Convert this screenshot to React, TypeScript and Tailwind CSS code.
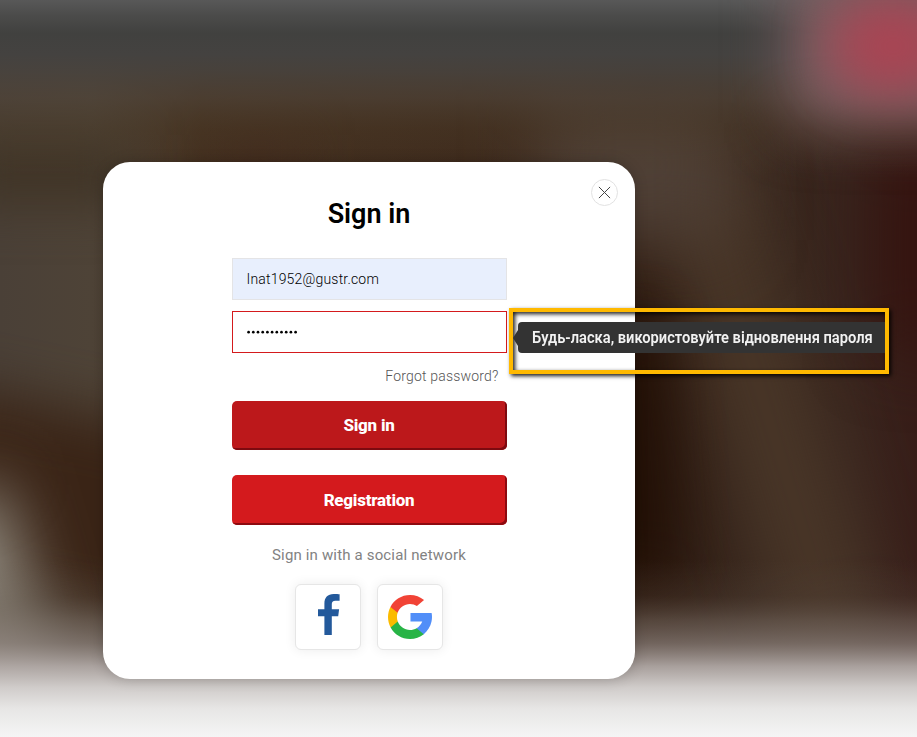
import React from 'react';

function Backdrop() {
  return (
    <svg className="absolute inset-0" width="917" height="737" viewBox="0 0 917 737" aria-hidden="true">
      <defs>
        <linearGradient id="wall">
          <stop offset="0" stopColor="#4a4037" />
          <stop offset="0.1" stopColor="#4e4337" />
          <stop offset="0.22" stopColor="#44301f" />
          <stop offset="0.61" stopColor="#3c281b" />
          <stop offset="0.71" stopColor="#2f1c12" />
          <stop offset="0.83" stopColor="#36251c" />
          <stop offset="0.93" stopColor="#38241d" />
          <stop offset="1" stopColor="#371d18" />
        </linearGradient>
        <linearGradient id="header" x1="0" y1="0" x2="0" y2="1">
          <stop offset="0" stopColor="#585858" />
          <stop offset="0.09" stopColor="#4b4b4a" />
          <stop offset="0.19" stopColor="#41413f" />
          <stop offset="0.31" stopColor="#444240" />
          <stop offset="0.41" stopColor="#48433e" stopOpacity="0.9" />
          <stop offset="0.56" stopColor="#4f4439" stopOpacity="0.67" />
          <stop offset="0.74" stopColor="#4d3e2b" stopOpacity="0.33" />
          <stop offset="1" stopColor="#4d3e2b" stopOpacity="0" />
        </linearGradient>
        <linearGradient id="floor" x1="0" y1="0" x2="0" y2="1">
          <stop offset="0" stopColor="#5e5045" stopOpacity="0" />
          <stop offset="0.2" stopColor="#5e5045" stopOpacity="0.2" />
          <stop offset="0.34" stopColor="#776b62" stopOpacity="0.53" />
          <stop offset="0.47" stopColor="#8a7f79" stopOpacity="0.73" />
          <stop offset="0.6" stopColor="#b0a8a5" stopOpacity="0.94" />
          <stop offset="0.72" stopColor="#d0ccca" />
          <stop offset="0.84" stopColor="#e7e6e5" />
          <stop offset="1" stopColor="#f5f5f5" />
        </linearGradient>
      </defs>
      <rect width="917" height="737" fill="url(#wall)" />
      <rect className="blur-[38px]" x="715" y="130" width="90" height="520" transform="rotate(-17 760 390)" fill="#4b3829" />
      <rect className="blur-[35px]" x="540" y="90" width="190" height="150" fill="#4f4036" />
      <rect className="blur-[30px]" x="560" y="320" width="105" height="260" transform="rotate(-4 612 450)" fill="#200e04" />
      <rect className="blur-[35px]" x="880" y="140" width="110" height="210" fill="#35130f" />
      <rect className="blur-[25px]" x="-40" y="135" width="170" height="70" fill="#403426" />
      <rect className="blur-[28px]" x="-80" y="415" width="330" height="200" transform="rotate(12 85 515)" fill="#3a2416" />
      <rect className="blur-[25px]" x="220" y="135" width="80" height="60" fill="#40291c" />
      <rect width="917" height="175" fill="url(#header)" />
      <rect className="blur-[30px]" x="790" y="-32" width="200" height="155" fill="#7c6063" />
      <ellipse className="blur-[26px]" cx="893" cy="46" rx="65" ry="50" fill="#a94453" />
      <rect className="blur-[32px]" x="-90" y="495" width="130" height="260" transform="rotate(-16 -25 625)" fill="#8d877c" />
      <rect y="560" width="917" height="177" fill="url(#floor)" />
    </svg>
  );
}

function FacebookIcon() {
  return (
    <svg width="22" height="41" viewBox="0 0 22 41" className="-mt-[5px] ml-[2px]" fill="#23599b">
      <path d="M21.6.3v6.4h-4.2c-2.7 0-3.6 1.2-3.6 3.6v5h7.3l-.9 6.9h-6.4V41H6.4V22.2H0v-6.9h6.4V9.8C6.4 3.5 9.6 0 15.7 0c2.6 0 4.7.1 5.9.3Z" />
    </svg>
  );
}

function GoogleIcon() {
  return (
    <svg width="44" height="44" viewBox="0 0 512 512">
      <path fill="#fbbb00" d="M113.47 309.408 95.648 375.94l-65.139 1.378C11.042 341.211 0 299.9 0 256c0-42.451 10.324-82.483 28.624-117.732h.014l57.992 10.632 25.404 57.644c-5.317 15.501-8.215 32.141-8.215 49.456.002 18.792 3.406 36.797 9.651 53.408z" />
      <path fill="#518ef8" d="M507.527 208.176C510.467 223.662 512 239.655 512 256c0 18.328-1.927 36.206-5.598 53.451-12.462 58.683-45.025 109.925-90.134 146.187l-.014-.014-73.044-3.727-10.338-64.535c29.932-17.554 53.324-45.025 65.646-77.911h-136.89V208.176h245.899z" />
      <path fill="#28b446" d="m416.253 455.624.014.014C372.396 490.901 316.666 512 256 512c-97.491 0-182.252-54.491-225.491-134.681l82.961-67.91c21.619 57.698 77.278 98.771 142.53 98.771 28.047 0 54.323-7.582 76.87-20.818l83.383 68.262z" />
      <path fill="#f14336" d="m419.404 58.936-82.933 67.896C313.136 112.246 285.552 103.82 256 103.82c-66.729 0-123.429 42.957-143.965 102.724l-83.397-68.276h-.014C71.23 56.123 157.06 0 256 0c62.115 0 119.068 22.126 163.404 58.936z" />
    </svg>
  );
}

function SocialButton({ label, children }: { label: string; children: React.ReactNode }) {
  return (
    <button
      aria-label={label}
      className="flex size-[66px] items-center justify-center rounded-md border border-[#e6e6e6] bg-white shadow-[0_0_12px_rgba(0,0,0,0.08)]"
    >
      {children}
    </button>
  );
}

function ErrorTooltip() {
  return (
    <div className="absolute top-[308px] left-[509px] flex h-[66px] w-[380px] items-start border-4 border-[#ffb900] pt-[10px] shadow-[2px_2px_4px_rgba(0,0,0,0.9),inset_2px_2px_4px_rgba(0,0,0,0.9)]">
      <div className="flex w-full items-center">
        <div className="h-0 w-0 shrink-0 border-y-[8px] border-r-[5px] border-y-transparent border-r-[#333]" />
        <div className="flex h-[31px] min-w-0 flex-1 items-center rounded-l-[4px] bg-[#333] pl-[14px]">
          <span className="origin-left scale-x-[0.917] text-[16px] leading-none font-semibold whitespace-nowrap text-[#f2f2f2]">
            Будь-ласка, використовуйте відновлення пароля
          </span>
        </div>
      </div>
    </div>
  );
}

export default function App() {
  return (
    <main className="relative flex h-[737px] w-[917px] items-start overflow-hidden pt-[162px] pl-[103px] font-[Roboto,sans-serif]">
      <Backdrop />
      <section className="relative flex h-[517px] w-[532px] flex-col items-center rounded-[27px] bg-white pt-[34px] shadow-[0_0_14px_rgba(0,0,0,0.2)]">
        <button
          aria-label="Close"
          className="absolute top-[17px] right-[17px] flex size-[27px] items-center justify-center rounded-full border border-[#e2e2e2]"
        >
          <svg width="13" height="13" viewBox="0 0 13 13" stroke="#444" strokeWidth="1" className="-mt-px -ml-px">
            <path d="M.9.9l11.2 11.2M12.1.9L.9 12.1" />
          </svg>
        </button>
        <h1 className="text-[27px] leading-9 font-semibold text-black">Sign in</h1>
        <form className="flex w-[275px] flex-col gap-[25px] pt-[26px]">
          <div className="flex flex-col">
            <div className="flex flex-col gap-[11px]">
              <div className="flex h-[42px] items-center border border-[#e4e4e6] bg-[#e8effd] px-[14px] text-[14px] font-light tracking-[0.19px] text-black">
                Inat1952@gustr.com
              </div>
              <div className="flex h-[42px] items-center border border-[#d41a1d] bg-white px-[14px]">
                <svg width="52" height="4" viewBox="0 0 52 4">
                  {Array.from({ length: 11 }, (_, i) => (
                    <circle key={i} cx={1.6 + i * 4.7} cy={2.2} r={1.35} />
                  ))}
                </svg>
              </div>
            </div>
            <a className="self-end pt-[13px] pr-2 pb-[15px] text-[14px] leading-5 font-light tracking-[0.18px] text-[#555]">
              Forgot password?
            </a>
            <button className="h-[49px] rounded-[5px] bg-[#bc181b] text-[17px] font-extrabold tracking-[-0.25px] text-white shadow-[inset_-2px_-2px_0_#7d0a10]">
              Sign in
            </button>
          </div>
          <button className="h-[50px] rounded-[5px] bg-[#d41a1d] pt-px text-[17px] font-extrabold tracking-[-0.25px] text-white shadow-[inset_-2px_-2px_0_#8d0a10]">
            Registration
          </button>
        </form>
        <div className="flex flex-col items-center gap-[19px] pt-5">
          <p className="text-[15px] leading-5 tracking-[0.16px] text-[#828282]">Sign in with a social network</p>
          <div className="flex gap-4">
            <SocialButton label="Facebook">
              <FacebookIcon />
            </SocialButton>
            <SocialButton label="Google">
              <GoogleIcon />
            </SocialButton>
          </div>
        </div>
      </section>
      <ErrorTooltip />
    </main>
  );
}
